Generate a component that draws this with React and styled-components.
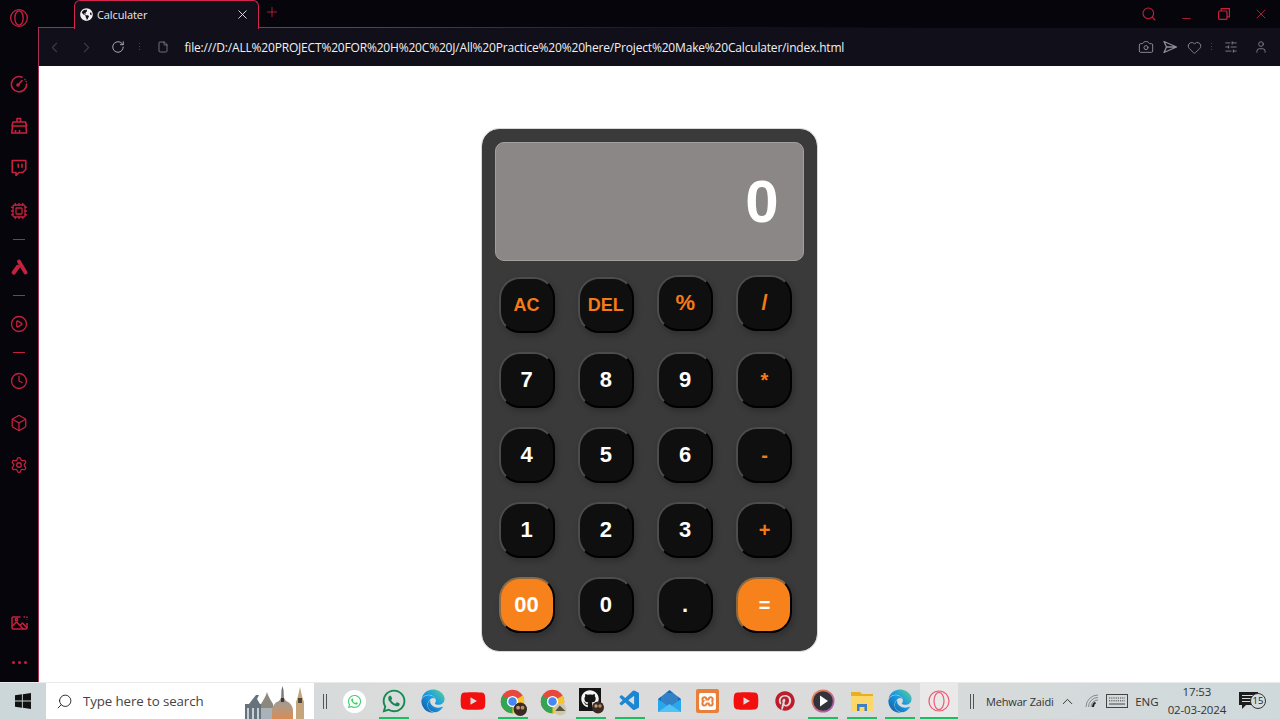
import React from 'react';
import styled, { createGlobalStyle } from 'styled-components';
import { Search, Minus, X, Plus, RotateCw, ChevronLeft, ChevronRight, File, Camera, Heart, SlidersHorizontal, User, Clock, Box, Settings, CirclePlay, Twitch, Cpu, ChevronUp } from 'lucide-react';
import { FaGlobeAmericas, FaWhatsapp, FaEdge, FaYoutube, FaPinterest, FaGithub } from 'react-icons/fa';
import { VscVscode } from 'react-icons/vsc';
import { SiXampp } from 'react-icons/si';

const Global = createGlobalStyle`
  html, body { margin: 0; padding: 0; width: 100%; height: 100%; overflow: hidden; background: #fff; }
  #root { width: 1280px; height: 719px; }
  * { box-sizing: border-box; }
`;

const crimson = '#c5213f';

const Screen = styled.div`
  width: 1280px; height: 719px; display: flex; flex-direction: column;
  font-family: "Open Sans", "Liberation Sans", sans-serif;
`;
const Frame = styled.div`display: flex; height: 682px; background: #06050b;`;

const Sidebar = styled.nav`
  width: 38px; flex: none; display: flex; flex-direction: column; align-items: center; color: ${crimson};
`;
const SideSlot = styled.div`
  width: 100%; height: ${p => p.$h || 42}px; margin-top: ${p => p.$mt || 0}px;
  display: flex; align-items: center; justify-content: center; flex: none;
`;
const SideDash = styled.div`width: 12px; height: 1px; background: ${crimson}; margin: auto;`;
const SideGap = styled.div`flex: 1;`;
const Dots = styled.div`
  display: flex; gap: 3px;
  & > i { width: 3px; height: 3px; border-radius: 50%; background: ${crimson}; display: block; }
`;

const Main = styled.div`flex: 1; min-width: 0; display: flex; flex-direction: column; border-left: 1px solid #a83250;`;
const TabStrip = styled.div`
  height: 28px; flex: none; display: flex; align-items: flex-end; color: ${crimson};
  margin-left: -1px; padding-left: 36px;
  background: linear-gradient(to right, #c5213f 0, #a8203f 25%, rgba(120,30,60,.35) 50%, transparent 72%) bottom / 100% 1px no-repeat, #06050b;
`;
const Tab = styled.div`
  width: 185px; height: 29px; margin-bottom: -1px; flex: none; display: flex; align-items: center;
  background: #11101a; border: 1px solid #d22550; border-bottom: none; border-radius: 6px 6px 0 0;
  padding: 0 8px 2px 5px; color: #e9e9ec; font-size: 11px; position: relative; z-index: 1;
`;
const TabTitle = styled.span`flex: 1; margin-left: 4px; letter-spacing: -0.1px;`;
const NewTab = styled.div`width: 26px; height: 28px; display: flex; align-items: center; justify-content: center; margin-bottom: 2px;`;
const WinControls = styled.div`margin-left: auto; display: flex; height: 28px; align-items: center;`;
const WinButton = styled.div`
  width: 37.5px; display: flex; justify-content: center; align-items: center;
  padding-top: ${p => p.$low ? '9px' : '0'};
`;

const AddressBar = styled.div`
  height: 38px; flex: none; background: #11101a; display: flex; align-items: center; color: #8f8f97;
`;
const NavSlot = styled.div`
  width: ${p => p.$w || 31.5}px; height: 100%; flex: none; display: flex; align-items: center; justify-content: center;
  color: ${p => p.$c || 'inherit'};
`;
const VDots = styled.div`
  width: 1px; height: 9px; background: repeating-linear-gradient(to bottom, #44444c 0 1px, transparent 1px 3px);
`;
const Url = styled.div`
  margin-left: 4px; color: #f0f0f2; font-size: 12px; white-space: nowrap; letter-spacing: -0.18px;
`;
const ToolRight = styled.div`margin-left: auto; display: flex; align-items: center; height: 100%; padding-right: 4px;`;

const Page = styled.main`
  flex: 1; background: #fff; padding: 62px 21px 0 0; display: flex; justify-content: center; align-items: flex-start;
`;
const Calc = styled.div`
  width: 337px; height: 524px; background: #3a3a3a; border-radius: 18px; border: 1px solid #d8d8d8;
  padding: 13px 13px 0; background-clip: padding-box;
`;
const Display = styled.div`
  width: 309px; height: 119px; background: #8b8786; border: 1px solid #a29f9e; border-radius: 9px;
  display: flex; align-items: center; justify-content: flex-end; padding-right: 24px;
  color: #fff; font: bold 60px "Liberation Sans", Arial, sans-serif;
`;
const Keys = styled.div`
  display: grid; grid-template-columns: repeat(4, 56px); justify-content: space-between; row-gap: 19px;
  margin-top: 16px; padding: 0 11px 0 4px;
`;
const Key = styled.button`
  width: 56px; height: 56px; padding: 0; border-radius: 21px; border: 2px solid;
  border-color: ${p => p.$fill ? '#8a6a45 #000 #000 #8a6a45' : '#4c4c4c #000 #000 #4c4c4c'};
  background: ${p => p.$fill ? '#f7821b' : '#0f0f0f'};
  box-shadow: 2px 3px 6px rgba(0,0,0,.22);
  color: ${p => p.$accent ? '#f47b16' : '#fff'};
  font: bold ${p => p.$size || 22}px "Liberation Sans", Arial, sans-serif;
  display: flex; align-items: center; justify-content: center;
  margin-top: ${p => p.$lift ? '-2px' : '0'};
`;

const Taskbar = styled.footer`
  height: 37px; flex: none; display: flex; align-items: stretch; border-top: 1px solid #eaeaea;
  background: linear-gradient(to right, #ccd7d9 0%, #dcdcdc 35%, #dbdbdb 65%, #cfd9db 100%);
  color: #2c2c2c;
`;
const Start = styled.div`width: 46px; flex: none; display: flex; align-items: center; justify-content: center;`;
const SearchBox = styled.div`
  width: 268px; flex: none; background: #fff; display: flex; align-items: center; padding-left: 10px; gap: 10px;
  font-size: 13.3px; color: #444; position: relative; overflow: hidden;
`;
const SearchText = styled.span`letter-spacing: -0.1px;`;
const City = styled.svg`position: absolute; right: 8px; bottom: 0;`;
const Bars = styled.div`
  width: ${p => p.$w}px; flex: none; display: flex; align-items: center; justify-content: center; gap: 2px;
  & > i { width: 1px; height: 15px; background: #555; display: block; }
`;
const AppCell = styled.div`
  width: ${p => p.$w || 39}px; flex: none; position: relative; display: flex; align-items: center; justify-content: center;
  background: ${p => p.$active ? '#e9e9e9' : 'transparent'};
  &::after {
    content: ''; position: absolute; bottom: 0; height: 2px; width: ${p => p.$active ? '100%' : '30px'};
    background: ${p => p.$open ? '#17c063' : 'transparent'};
  }
`;
const Tray = styled.div`display: flex; align-items: center; flex: 1; min-width: 0;`;
const TrayName = styled.div`width: 70px; font-size: 11px; color: #333; white-space: nowrap; letter-spacing: -0.15px;`;
const TraySlot = styled.div`
  width: ${p => p.$w}px; flex: none; display: flex; align-items: center; justify-content: center; position: relative;
  font-size: 11.5px; color: #333;
`;
const ClockBox = styled.div`
  width: 66px; flex: none; text-align: center; font-size: 11.5px; line-height: 18px; color: #333; letter-spacing: -0.15px;
`;
const NoteBadge = styled.span`
  position: absolute; left: 20px; top: 1px; width: 16px; height: 16px; border-radius: 50%;
  border: 1px solid #333; background: #d4dcdd; font-size: 9.5px; line-height: 14px; text-align: center; color: #222;
`;
const WhatsWhite = styled.div`
  width: 23px; height: 23px; border-radius: 50%; background: #fff; display: flex; align-items: center; justify-content: center;
`;
const EdgeIcon = styled(FaEdge)`fill: url(#edgeGrad);`;
const GradDefs = styled.svg`position: absolute; width: 0; height: 0;`;
const XamppBox = styled.div`
  width: 23px; height: 24px; background: #e9803a; border-radius: 2px; display: flex; align-items: center; justify-content: center;
`;

const Opera = ({ size = 22, color = crimson, sw = 1.6 }) => (
  <svg width={size} height={size} viewBox="0 0 24 24" fill="none" stroke={color} strokeWidth={sw}>
    <circle cx="12" cy="12" r="10" /><ellipse cx="12" cy="12" rx="5" ry="8.6" />
  </svg>
);
const GaugeIcon = () => (
  <svg width="18" height="18" viewBox="0 0 18 18" fill="none" stroke={crimson} strokeWidth="1.6" strokeLinecap="round">
    <path d="M12 2.2A7.6 7.6 0 1 0 16.6 9" /><path d="M8 10l4-4.500" /><circle cx="8" cy="10" r="1" fill={crimson} />
    <path d="M15 4.500v.1M16.200 6.500v.1" />
  </svg>
);
const BrushIcon = () => (
  <svg width="18" height="18" viewBox="0 0 18 18" fill="none" stroke={crimson} strokeWidth="1.6" strokeLinejoin="round">
    <path d="M7 5V1.500h3.600V5" /><path d="M3 5h12.600l.9 4H2z" /><path d="M2.600 9l-.9 7h14.800l-.6-7" /><path d="M5.500 16v-3M9.500 16v-3" />
  </svg>
);
const AriaIcon = () => (
  <svg width="17" height="16" viewBox="0 0 17 16" fill="none" stroke={crimson} strokeLinecap="round">
    <path d="M8 2.500L14.500 13.500" strokeWidth="3.800" /><path d="M6.800 8L2.800 13.500" strokeWidth="4.200" />
  </svg>
);
const GalleryIcon = () => (
  <svg width="19" height="18" viewBox="0 0 18 18" fill="none" stroke={crimson} strokeWidth="1.500" strokeLinejoin="round">
    <path d="M10 3H2.500A1 1 0 0 0 1.500 4v10a1 1 0 0 0 1 1h13a1 1 0 0 0 1-1V9" />
    <path d="M13 3h3.500v3" strokeDasharray="1.500 1.500" />
    <path d="M1.500 12.500L6 8l7 7" /><path d="M9.500 11.500L12 9l4.500 5" /><circle cx="6" cy="5.800" r="1.200" />
  </svg>
);
const WinLogo = () => (
  <svg width="16" height="16" viewBox="0 0 16 16" fill="#111"><path d="M0 2.300l6.900-1v6.300H0zM7.800 1.200L16 0v7.600H7.800zM0 8.500h6.900v6.300L0 13.800zM7.800 8.500H16V16l-8.200-1.200z" /></svg>
);
const SendIcon = () => (
  <svg width="16" height="16" viewBox="0 0 16 16" fill="none" stroke="currentColor" strokeWidth="1.300" strokeLinejoin="round">
    <path d="M2 2.500L14.500 8 2 13.500 4.500 8zM4.500 8h10" />
  </svg>
);
const Avatar = () => (
  <g><circle cx="18.500" cy="18.500" r="6" fill="#3a2a22" /><circle cx="16.500" cy="17" r="1.700" fill="#c99a78" /><circle cx="20.500" cy="17" r="1.700" fill="#b98a68" /></g>
);
const Chrome = ({ avatar }) => (
  <svg width="29" height="29" viewBox="-1.500 -1.500 26 26">
    <circle cx="11.500" cy="11.500" r="10.500" fill="#e6493c" />
    <path d="M11.500 11.500L20.600 6.200A10.500 10.500 0 0 1 6.200 20.600z" fill="#f7c331" />
    <path d="M11.500 11.500L11.500 22A10.500 10.500 0 0 1 2.400 6.300z" fill="#31a552" />
    <circle cx="11.500" cy="11.500" r="5" fill="#fff" /><circle cx="11.500" cy="11.500" r="3.800" fill="#4587f3" />
    {avatar === 1 ? <Avatar /> : <g><circle cx="18.500" cy="18.500" r="5.500" fill="#cfc7a8" /><path d="M14 20l4-5 5 5z" fill="#55523e" /></g>}
  </svg>
);
const Github = () => (
  <svg width="26" height="26" viewBox="0 0 26 26">
    <rect x="1" width="22" height="23" fill="#141414" />
    <foreignObject x="3" y="2" width="18" height="18"><FaGithub size={18} color="#f5f5f5" /></foreignObject>
    <g transform="translate(1.500 1)"><Avatar /></g>
  </svg>
);
const Mail = () => (
  <svg width="23" height="22" viewBox="0 0 23 22">
    <path d="M0 9L11.500 0 23 9v13H0z" fill="#0f6cbd" /><path d="M3 3h17v12H3z" fill="#fff" opacity=".15" />
    <path d="M0 9l11.500 8L23 9v13H0z" fill="#28a8ea" /><path d="M0 22l11.500-8L23 22z" fill="#50c2f5" />
  </svg>
);
const Player = () => (
  <svg width="24" height="24" viewBox="0 0 24 24">
    <defs><linearGradient id="pring" x1="0" y1="0" x2="1" y2="1"><stop offset="0" stopColor="#ef8a3a" /><stop offset="1" stopColor="#a24fc8" /></linearGradient></defs>
    <circle cx="12" cy="12" r="11.500" fill="url(#pring)" /><circle cx="12" cy="12" r="9.800" fill="#33333b" /><path d="M9 6.500l8 5.500-8 5.500z" fill="#fff" />
  </svg>
);
const Folder = () => (
  <svg width="22" height="20" viewBox="0 0 22 20">
    <path d="M0 1h9l2 2h11v4H0z" fill="#e8b020" /><path d="M0 5h22v15H0z" fill="#fcd76a" /><path d="M6 13h10v7h-2.500v-4h-5v4H6z" fill="#3d7fc4" />
  </svg>
);
const Wifi = () => (
  <svg width="14" height="14" viewBox="0 0 14 14" fill="none" stroke="#666" strokeWidth="1">
    <path d="M1 13A12 12 0 0 1 13 1M3.500 13A9.500 9.500 0 0 1 13 3.500M6 13A7 7 0 0 1 13 6" opacity=".7" /><path d="M8 13A5 5 0 0 1 10.500 8.500" stroke="#222" strokeWidth="2" />
  </svg>
);
const KeyboardIcon = () => (
  <svg width="22" height="14" viewBox="0 0 22 14" fill="none" stroke="#444">
    <rect x=".5" y=".5" width="21" height="13" />
    <path d="M3 4h16M3 6.800h16" strokeDasharray="1.200 1" /><path d="M3 10h16" />
  </svg>
);
const NoteIcon = () => (
  <svg width="19" height="18" viewBox="0 0 19 18" fill="#1c1c1c">
    <path d="M0 0h19v13H7l-4 4v-4H0z" /><path d="M3 3.500h13M3 6.500h13M3 9.500h9" stroke="#d4dcdd" />
  </svg>
);
const CitySvg = () => (
  <City width="62" height="35" viewBox="0 0 62 35">
    <defs>
      <linearGradient id="domeGrad" x1="0" y1="0" x2="0" y2="1"><stop offset="0" stopColor="#5d6672" /><stop offset=".55" stopColor="#a99a8c" /><stop offset="1" stopColor="#d98c55" /></linearGradient>
    </defs>
    <path d="M1 35V20h4l3-4 4-5 3 0-2 4 3 5h3v15z" fill="#66727c" />
    <path d="M3 24h2v11H3zM8 24h2v11H8zM13 24h2v11h-2z" fill="#c7ced4" />
    <path d="M17 35V20l3-5 2-4 1-3 1 3 2 4 3 5v15z" fill="#8c8880" />
    <path d="M17 35V24h12v11z" fill="#a8b2b8" />
    <path d="M28 35V27a11 11 0 0 1 7-10l2-3 .5-8 1-4 1 4 .5 8 2 3a11 11 0 0 1 7 10v8z" fill="url(#domeGrad)" />
    <path d="M37 14h3v4h-3z" fill="#3f3a36" />
    <path d="M52 35V18l2-6 2-9 2 9 2 6v17z" fill="#c5a67c" />
    <path d="M54 14h4v5h-4z" fill="#4d4539" />
  </City>
);

const rows = [
  ['AC', 1, 0, 18], ['DEL', 1, 0, 18], ['%', 1, 0, 22, 1], ['/', 1, 0, 22, 1],
  ['7'], ['8'], ['9'], ['*', 1, 0, 20],
  ['4'], ['5'], ['6'], ['-', 1, 0, 20],
  ['1'], ['2'], ['3'], ['+', 1, 0, 20],
  ['00', 0, 1], ['0'], ['.'], ['=', 0, 1, 20],
];

const Icon = { size: 18, strokeWidth: 1.7 };

export default function App() {
  return (
    <Screen>
      <Global />
      <GradDefs>
        <defs>
          <linearGradient id="edgeGrad" x1="0" y1="1" x2="1" y2="0">
            <stop offset="0" stopColor="#0c59a4" /><stop offset=".55" stopColor="#1b9de2" /><stop offset="1" stopColor="#5fd68a" />
          </linearGradient>
        </defs>
      </GradDefs>
      <Frame>
        <Sidebar>
          <SideSlot $h={36}><Opera size={20} /></SideSlot>
          <SideSlot $mt={27}><GaugeIcon /></SideSlot>
          <SideSlot><BrushIcon /></SideSlot>
          <SideSlot><Twitch {...Icon} strokeWidth={2.200} /></SideSlot>
          <SideSlot $mt={1}><Cpu {...Icon} /></SideSlot>
          <SideSlot $h={14}><SideDash /></SideSlot>
          <SideSlot><AriaIcon /></SideSlot>
          <SideSlot $h={15}><SideDash /></SideSlot>
          <SideSlot><CirclePlay {...Icon} /></SideSlot>
          <SideSlot $h={14}><SideDash /></SideSlot>
          <SideSlot $mt={1}><Clock {...Icon} /></SideSlot>
          <SideSlot><Box {...Icon} /></SideSlot>
          <SideSlot><Settings {...Icon} /></SideSlot>
          <SideGap />
          <SideSlot $h={40}><GalleryIcon /></SideSlot>
          <SideSlot $h={39}><Dots><i /><i /><i /></Dots></SideSlot>
        </Sidebar>
        <Main>
          <TabStrip>
            <Tab>
              <FaGlobeAmericas size={13} color="#f2f2f4" />
              <TabTitle>Calculater</TabTitle>
              <X size={15} strokeWidth={1.500} color="#e4e4e8" />
            </Tab>
            <NewTab><Plus size={16} strokeWidth={1.300} /></NewTab>
            <WinControls>
              <WinButton><Search size={16} strokeWidth={1.600} /></WinButton>
              <WinButton $low><Minus size={13} strokeWidth={1.500} /></WinButton>
              <WinButton>
                <svg width="12" height="12" viewBox="0 0 12 12" fill="none" stroke={crimson} strokeWidth="1.200"><rect x=".6" y="3" width="8.400" height="8.400" rx="1" /><path d="M3.200 3V.6h8.200v8.200H9" /></svg>
              </WinButton>
              <WinButton><X size={16} strokeWidth={1.300} /></WinButton>
            </WinControls>
          </TabStrip>
          <AddressBar>
            <NavSlot $c="#3c3c46"><ChevronLeft size={17} strokeWidth={1.500} /></NavSlot>
            <NavSlot $c="#3c3c46"><ChevronRight size={17} strokeWidth={1.500} /></NavSlot>
            <NavSlot $c="#b0b0b6"><RotateCw size={14} strokeWidth={1.600} /></NavSlot>
            <NavSlot $w={11}><VDots /></NavSlot>
            <NavSlot $w={36}><File size={12} strokeWidth={1.500} /></NavSlot>
            <Url>file:///D:/ALL%20PROJECT%20FOR%20H%20C%20J/All%20Practice%20%20here/Project%20Make%20Calculater/index.html</Url>
            <ToolRight>
              <NavSlot $w={24.500}><Camera size={16} strokeWidth={1.400} /></NavSlot>
              <NavSlot $w={24.500}><SendIcon /></NavSlot>
              <NavSlot $w={24.500}><Heart size={15} strokeWidth={1.400} /></NavSlot>
              <NavSlot $w={8}><VDots /></NavSlot>
              <NavSlot $w={31}><SlidersHorizontal size={14} strokeWidth={1.400} /></NavSlot>
              <NavSlot $w={30}><User size={14} strokeWidth={1.400} /></NavSlot>
            </ToolRight>
          </AddressBar>
          <Page>
            <Calc>
              <Display>0</Display>
              <Keys>
                {rows.map(([label, accent, fill, size, lift]) => (
                  <Key key={label} $accent={accent} $fill={fill} $size={size} $lift={lift}>{label}</Key>
                ))}
              </Keys>
            </Calc>
          </Page>
        </Main>
      </Frame>
      <Taskbar>
        <Start><WinLogo /></Start>
        <SearchBox>
          <Search size={17} strokeWidth={1.300} color="#222" transform="scale(-1 1)" />
          <SearchText>Type here to search</SearchText>
          <CitySvg />
        </SearchBox>
        <Bars $w={21.400}><i /><i /></Bars>
        <AppCell><WhatsWhite><FaWhatsapp size={15} color="#3fd06a" /></WhatsWhite></AppCell>
        <AppCell $open><FaWhatsapp size={26} color="#148a52" /></AppCell>
        <AppCell $w={39.500}><EdgeIcon size={24} /></AppCell>
        <AppCell $w={40}><FaYoutube size={26} color="#f40f0f" /></AppCell>
        <AppCell $w={39.500} $open><Chrome avatar={1} /></AppCell>
        <AppCell $w={39.500}><Chrome avatar={2} /></AppCell>
        <AppCell $open><Github /></AppCell>
        <AppCell $open><VscVscode size={24} color="#1a86d4" /></AppCell>
        <AppCell><Mail /></AppCell>
        <AppCell $w={38}><XamppBox><SiXampp size={17} color="#fff" /></XamppBox></AppCell>
        <AppCell $w={38.500}><FaYoutube size={26} color="#f40f0f" /></AppCell>
        <AppCell $w={38.500}><FaPinterest size={20} color="#bd1c2b" /></AppCell>
        <AppCell $w={38.500} $open><Player /></AppCell>
        <AppCell $w={38.500} $open><Folder /></AppCell>
        <AppCell $open><EdgeIcon size={24} /></AppCell>
        <AppCell $w={38} $open $active><Opera size={24} color="#ee5b72" sw={1.200} /></AppCell>
        <Tray>
          <Bars $w={28}><i /><i /></Bars>
          <TrayName>Mehwar Zaidi</TrayName>
          <TraySlot $w={24}><ChevronUp size={17} strokeWidth={1.400} /></TraySlot>
          <TraySlot $w={24}><Wifi /></TraySlot>
          <TraySlot $w={26}><KeyboardIcon /></TraySlot>
          <TraySlot $w={34}>ENG</TraySlot>
          <ClockBox>17:53<br />02-03-2024</ClockBox>
          <TraySlot $w={38}><NoteIcon /><NoteBadge>15</NoteBadge></TraySlot>
        </Tray>
      </Taskbar>
    </Screen>
  );
}
